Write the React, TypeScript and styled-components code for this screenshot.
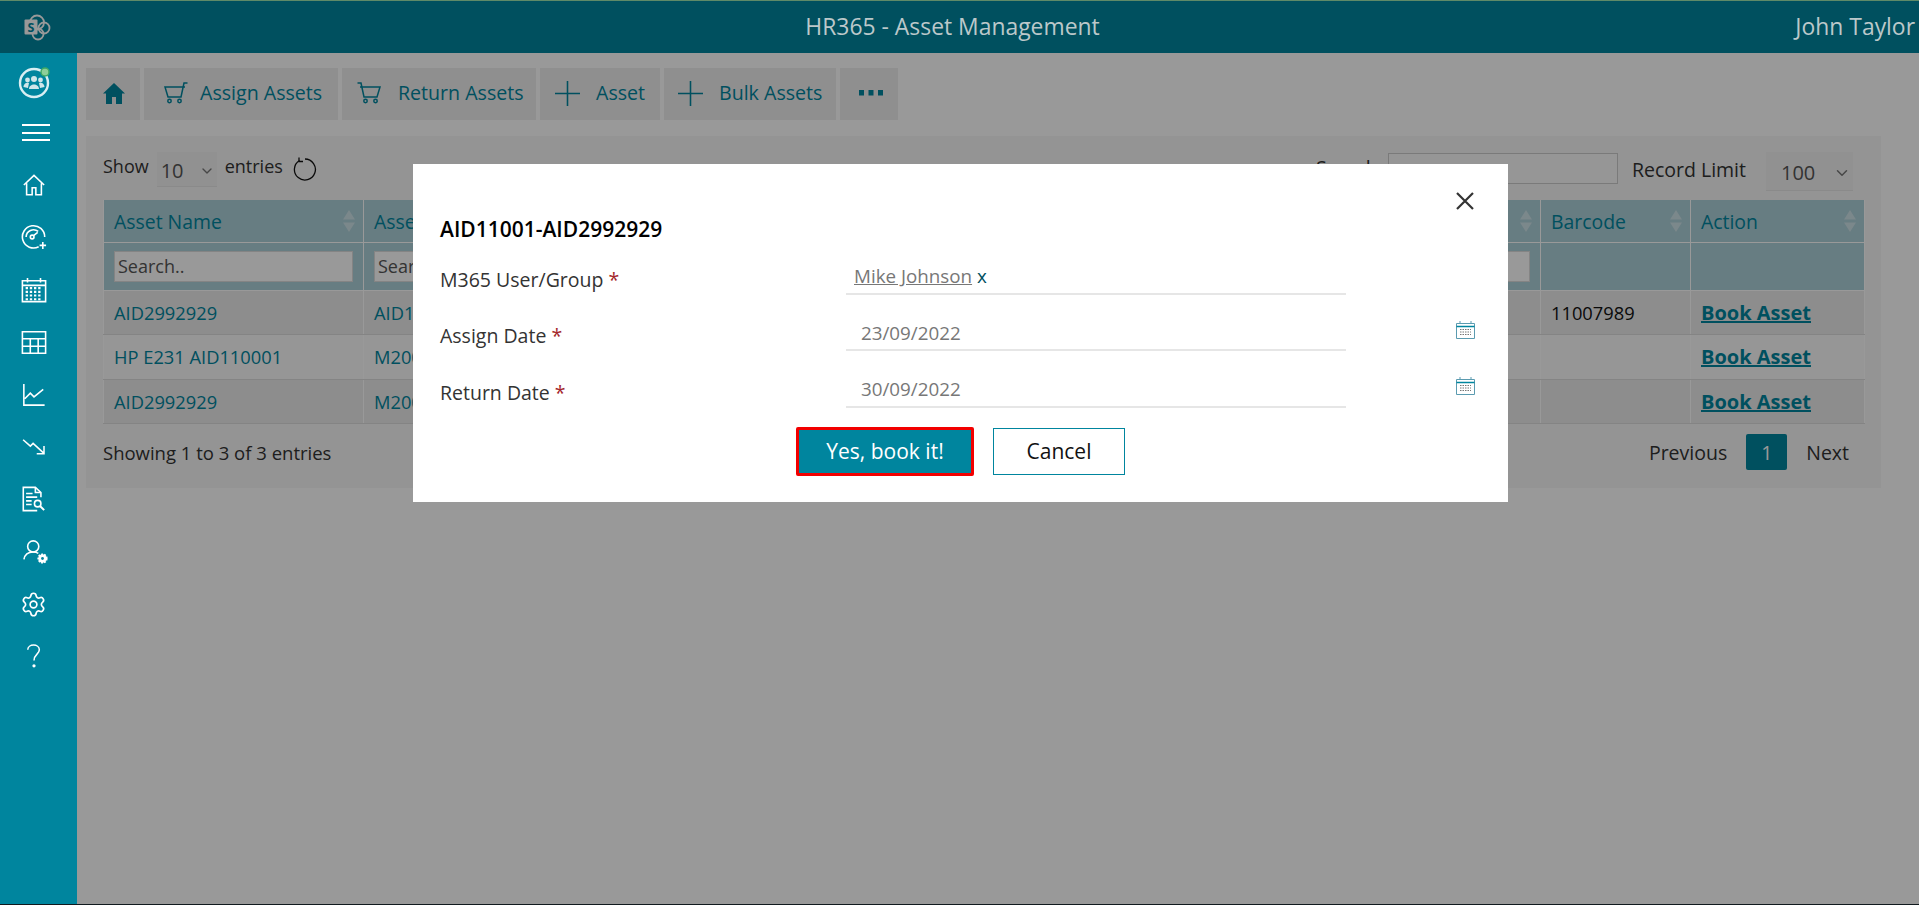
import * as React from "react";
import styled, { createGlobalStyle } from "styled-components";
import { ChevronDown } from "lucide-react";

const GlobalStyle = createGlobalStyle`
  html, body {
    margin: 0;
    padding: 0;
    height: 100%;
    overflow: hidden;
    background: #fff;
    font-family: "Open Sans", "Noto Sans", "Liberation Sans", sans-serif;
  }
  * { box-sizing: border-box; }
`;

const SPage = styled.div`
  height: 905px;
  display: flex;
  flex-direction: column;
  border-bottom: 1px solid #1d2a33;
`;
const SHeader = styled.header`
  position: relative;
  z-index: 3;
  height: 53px;
  flex: none;
  display: grid;
  grid-template-columns: 1fr auto 1fr;
  align-items: center;
  padding-bottom: 2px;
  background: #00505f;
  border-top: 1px solid #5f8a68;
  color: #bcc8ca;
  font-size: 22.9px;
`;
const SLogoSlot = styled.div`
  padding: 2px 0 0 24px;
  display: flex;
`;
const SAppTitle = styled.div`
  margin-right: 14px;
`;
const SUser = styled.div`
  justify-self: end;
  margin-right: 4px;
  font-size: 22.9px;
`;
const SBody = styled.div`
  flex: 1;
  display: flex;
  min-height: 0;
`;
const SSidebar = styled.nav`
  position: relative;
  z-index: 3;
  width: 77px;
  flex: none;
  background: #00859e;
  display: flex;
  flex-direction: column;
  padding-top: 1px;
`;
const SNavItem = styled.div`
  width: 67px;
  height: 52.4px;
  display: flex;
  align-items: center;
  justify-content: center;
`;
const SMain = styled.main`
  flex: 1;
  padding: 15px 38px 0 9px;
  min-width: 0;
`;
const SToolbar = styled.div`
  display: flex;
  gap: 4px;
`;
const SToolButton = styled.div<{ $w: number; $pad: number; $gap?: number }>`
  width: ${(p) => p.$w}px;
  height: 52px;
  padding-left: ${(p) => p.$pad}px;
  background: #eeeeee;
  color: #00859e;
  display: flex;
  align-items: center;
  gap: ${(p) => p.$gap ?? 0}px;
  font-size: 19.6px;
  line-height: 26px;
  padding-bottom: 2px;
  white-space: nowrap;
`;
const SCard = styled.section`
  margin-top: 16px;
  height: 352px;
  background: #f7f7f7;
  padding: 16px 17px 0;
`;
const SControls = styled.div`
  height: 48px;
  display: flex;
  align-items: flex-start;
  font-size: 18px;
  color: #333;
`;
const SShowLabel = styled.span`
  line-height: 28px;
`;
const SSelect = styled.div<{ $w: number; $h: number; $ml?: number; $mr?: number; $pad: number }>`
  width: ${(p) => p.$w}px;
  height: ${(p) => p.$h}px;
  margin: 0 ${(p) => p.$mr ?? 0}px 0 ${(p) => p.$ml ?? 0}px;
  background: #f2f2f2;
  border-bottom: 1px solid #e6e6e6;
  color: #555;
  font-size: 20px;
  display: flex;
  align-items: center;
  justify-content: space-between;
  padding: 3px 2px 0 ${(p) => p.$pad}px;
  flex: none;
`;
const SEntries = styled.span`
  line-height: 28px;
  margin: 0 10px 0 8px;
`;
const SRefresh = styled.svg`
  margin-top: 5px;
`;
const SSpacer = styled.div`
  flex: 1;
`;
const SSearchLabel = styled.span`
  font-size: 19.5px;
  line-height: 31px;
`;
const SSearchInput = styled.div`
  width: 230px;
  height: 31px;
  margin: 1px 14px 0 5px;
  border: 1px solid #ccc;
  background: #fafafa;
`;
const SLimitLabel = styled.span`
  font-size: 19.5px;
  line-height: 36px;
  margin-right: 20px;
`;
const STable = styled.table`
  width: 100%;
  border-collapse: collapse;
  table-layout: fixed;
  font-size: 18.3px;
`;
const SHeadCell = styled.th`
  position: relative;
  height: 42px;
  padding: 1px 0 0 10px;
  text-align: left;
  font-weight: 400;
  font-size: 19.4px;
  color: #00859e;
  background: #acd0d9;
  border: 1px solid #fff;
  border-top: 0;
`;
const SSort = styled.svg`
  position: absolute;
  right: 8px;
  top: 10px;
`;
const SFilterCell = styled.td`
  height: 48px;
  padding: 0 10px;
  background: #acd0d9;
  border: 1px solid #fff;
`;
const SFilterInput = styled.input`
  display: block;
  width: 100%;
  height: 31px;
  border: 1px solid #ddd;
  background: #fff;
  padding: 0 3px;
  font-family: inherit;
  font-size: 18px;
  &::placeholder { color: #555; opacity: 1; }
`;
const SRow = styled.tr<{ $odd: boolean }>`
  background: ${(p) => (p.$odd ? "#ebebeb" : "#fafafa")};
`;
const SCell = styled.td<{ $plain?: boolean }>`
  height: 44.6px;
  padding: 0 10px;
  color: ${(p) => (p.$plain ? "#111" : "#00859e")};
  border: 1px solid #dcdcdc;
  border-left-color: #fff;
  border-right-color: #fff;
  white-space: nowrap;
  overflow: hidden;
`;
const SBookLink = styled.a`
  font-weight: 700;
  color: #00859e;
  text-decoration: underline;
  font-size: 20px;
`;
const SFooter = styled.div`
  margin-top: 10px;
  display: flex;
  align-items: center;
  justify-content: space-between;
  font-size: 18.5px;
  color: #333;
  padding-right: 15px;
`;
const SPager = styled.div`
  display: flex;
  align-items: center;
  gap: 19px;
  font-size: 19.5px;
`;
const SPageNum = styled.span`
  width: 41px;
  height: 36px;
  border-radius: 2px;
  background: #00859e;
  color: #fff;
  display: flex;
  align-items: center;
  justify-content: center;
`;
const SOverlay = styled.div`
  position: fixed;
  inset: 0;
  z-index: 2;
  background: rgba(0, 0, 0, 0.4);
  display: flex;
  justify-content: center;
  padding: 164px 0 0 2px;
`;
const SModal = styled.div`
  position: relative;
  width: 1095px;
  height: 338px;
  background: #fff;
  padding: 50px 26px 0 27px;
`;
const SClose = styled.svg`
  position: absolute;
  top: 27px;
  right: 33px;
`;
const SModalTitle = styled.h2`
  margin: 0;
  font-size: 21px;
  line-height: 30px;
  font-weight: 600;
  color: #000;
`;
const SFormRow = styled.div`
  height: 56.5px;
  display: grid;
  grid-template-columns: 406px 500px 1fr;
  align-items: center;
`;
const SLabel = styled.label`
  padding-top: 14px;
  font-size: 19.5px;
  color: #333;
`;
const SStar = styled.span`
  color: #a4262c;
`;
const SField = styled.div<{ $inset: number }>`
  align-self: end;
  height: 33px;
  margin-bottom: 6px;
  padding: 0 0 2px ${(p) => p.$inset}px;
  border-bottom: 2px solid #e6e6e6;
  font-size: 18.8px;
  color: #777;
  display: flex;
  align-items: center;
`;
const SPerson = styled.a`
  color: #777;
  text-decoration: underline;
`;
const SRemove = styled.span`
  color: #00505f;
  margin-left: 5px;
`;
const SCalSlot = styled.div`
  justify-self: end;
  margin: 2px 7px 0 0;
  display: flex;
`;
const SButtons = styled.div`
  margin-top: 13px;
  padding-left: 356px;
  display: flex;
  align-items: center;
  gap: 19px;
`;
const SYes = styled.button`
  width: 178px;
  height: 49px;
  border: 3px solid #f20000;
  border-radius: 2px;
  background: #00859e;
  color: #fff;
  font-family: inherit;
  font-size: 21px;
`;
const SCancel = styled.button`
  width: 132px;
  height: 47px;
  border: 1px solid #00859e;
  background: #fff;
  color: #111;
  font-family: inherit;
  font-size: 21px;
`;
const SMenuBars = styled.div`
  width: 28px;
  height: 17px;
  border-top: 2px solid #fff;
  border-bottom: 2px solid #fff;
  position: relative;
  margin-left: 5px;
  &::after {
    content: "";
    position: absolute;
    left: 0;
    right: 0;
    top: 5.5px;
    height: 2px;
    background: #fff;
  }
`;
const SBadge = styled.svg`
  margin: 4px 0 0 3px;
`;
const SCart = styled.svg<{ $flip?: boolean }>`
  flex: none;
  transform: ${(p) => (p.$flip ? "scaleX(-1)" : "none")};
`;
const SUserGlyph = styled.svg`
  margin-left: 5px;
`;

const W = { fill: "none", stroke: "#fff", strokeWidth: 1.7 };

const SharePointLogo = () => (
  <svg width="27" height="27" viewBox="0 0 27 27">
    <circle cx="13" cy="8.5" r="7" fill="none" stroke="#999" strokeWidth="1.800" />
    <circle cx="20" cy="14" r="5.500" fill="none" stroke="#999" strokeWidth="1.800" />
    <circle cx="14" cy="20" r="5.500" fill="none" stroke="#999" strokeWidth="1.800" />
    <rect x="0.500" y="5.500" width="13" height="15" rx="1" fill="#999" />
    <text x="7" y="17.500" textAnchor="middle" fontSize="12.500" fontWeight="700" fontFamily="Open Sans" fill="#00505f">S</text>
  </svg>
);

const AppBadge = () => (
  <SBadge width="34" height="34" viewBox="0 0 34 34">
    <circle cx="16" cy="18" r="14" fill="none" stroke="#d9eef2" strokeWidth="2.400" />
    <circle cx="16" cy="14" r="3" fill="#cfe6ea" />
    <circle cx="9.500" cy="15" r="2.400" fill="#cfe6ea" />
    <circle cx="22.500" cy="15" r="2.400" fill="#cfe6ea" />
    <path d="M11 24c0-6 10-6 10 0zM5.500 22c0-4 4-5 5.500-4l-1 5zM26.500 22c0-4-4-5-5.500-4l1 5z" fill="#cfe6ea" />
    <circle cx="27" cy="7" r="4" fill="#8ecf9a" stroke="#3fa864" strokeWidth="1.500" />
  </SBadge>
);

const navIcons: React.ReactNode[] = [
  <svg key="home" width="24" height="24" viewBox="0 0 26 26" {...W}>
    <path d="M2 13 13 2.500 24 13M5 11v12.500h6V16h4v7.500h6V11" />
  </svg>,
  <svg key="gauge" width="26" height="26" viewBox="0 0 28 28" {...W}>
    <path d="M19 24.500A12 12 0 1 1 25.500 14M5.500 14a8 8 0 0 1 13-6" />
    <circle cx="12" cy="14" r="2" />
    <path d="M13.500 12.500 18 9M20 23h7M23.500 19.500v7.500" />
  </svg>,
  <svg key="cal" width="26" height="26" viewBox="0 0 28 28" {...W}>
    <path d="M1.500 4h25v22.500h-25zM1.500 9h25M7 1v5M21 1v5" />
    <path d="M5 12h18M5 16h18M5 20h18M5 24h18" strokeDasharray="2.500 2" strokeWidth="2.200" />
  </svg>,
  <svg key="table" width="26" height="25" viewBox="0 0 28 26" {...W}>
    <path d="M1.500 1.500h25v23h-25zM1.500 9h25M1.500 17h25M10 9v15.500M18.500 9v15.500" />
  </svg>,
  <svg key="up" width="24" height="24" viewBox="0 0 26 26" {...W}>
    <path d="M2 1v23h22.500M3 17l6-6 4 4 10-8" />
  </svg>,
  <svg key="down" width="26" height="20" viewBox="0 0 28 22" {...W}>
    <path d="M2 3l8 7 3-3 12 11M25 10v8.500h-8" />
  </svg>,
  <svg key="report" width="25" height="26" viewBox="0 0 26 28" {...W}>
    <path d="M21 12V7l-6-5.500H2v25h15" />
    <path d="M15 1.500V7h6M5 8h7M5 12h12M5 16h6M5 20h6" />
    <circle cx="17.500" cy="19" r="3.500" />
    <path d="M20 21.500 24.500 26" strokeWidth="2.200" />
  </svg>,
  <SUserGlyph key="user" width="26" height="26" viewBox="0 0 28 28" {...W}>
    <circle cx="11" cy="8" r="6" />
    <path d="M1 22c1-6 5-8 10-8 2 0 4 .4 5.500 1.500" />
    <circle cx="21" cy="21" r="4.500" fill="#fff" stroke="#fff" strokeDasharray="2 1.200" strokeWidth="2" />
    <circle cx="21" cy="21" r="1.500" fill="#00859e" stroke="none" />
  </SUserGlyph>,
  <svg key="gear" width="27" height="27" viewBox="0 0 24 24" fill="none" stroke="#fff" strokeWidth="1.500" strokeLinecap="round" strokeLinejoin="round">
    <path d="M9.671 4.136a2.340 2.340 0 0 1 4.659 0 2.340 2.340 0 0 0 3.319 1.915 2.340 2.340 0 0 1 2.330 4.033 2.340 2.340 0 0 0 0 3.831 2.340 2.340 0 0 1-2.330 4.033 2.340 2.340 0 0 0-3.319 1.915 2.340 2.340 0 0 1-4.659 0 2.340 2.340 0 0 0-3.320-1.915 2.340 2.340 0 0 1-2.330-4.033 2.340 2.340 0 0 0 0-3.831A2.340 2.340 0 0 1 6.350 6.051a2.340 2.340 0 0 0 3.320-1.915" />
    <circle cx="12" cy="12" r="3" />
  </svg>,
  <svg key="help" width="16" height="26" viewBox="0 0 18 28" {...W}>
    <path d="M2 7c0-7 13-7 13 0 0 5-6 5-6 12" />
    <circle cx="9" cy="25" r="1" fill="#fff" />
  </svg>,
];

const HomeGlyph = () => (
  <svg width="22" height="21" viewBox="0 0 22 21" fill="#00859e">
    <path d="M11 0 0 10.500h3V21h6v-7h4v7h6V10.500h3z" />
  </svg>
);
const CartGlyph = ({ flip }: { flip?: boolean }) => (
  <SCart $flip={flip} width="24" height="22" viewBox="0 0 24 22" fill="none" stroke="#00859e" strokeWidth="1.500">
    <path d="M23.500 1H20l-3 14H4L1 5h20" />
    <circle cx="5.500" cy="19" r="1.700" />
    <circle cx="15.500" cy="19" r="1.700" />
  </SCart>
);
const PlusGlyph = () => (
  <svg width="25" height="25" viewBox="0 0 24 24" stroke="#00859e" strokeWidth="1.500">
    <path d="M0 12h24M12 0v24" />
  </svg>
);
const DotsGlyph = () => (
  <svg width="24" height="6" viewBox="0 0 24 6" fill="#00859e">
    <rect x="0" width="5" height="5.500" />
    <rect x="9.500" width="5" height="5.500" />
    <rect x="19" width="5" height="5.500" />
  </svg>
);
const RefreshGlyph = () => (
  <SRefresh width="24" height="24" viewBox="0 0 24 24" fill="none" stroke="#111" strokeWidth="1.300">
    <path d="M6.500 3.500A10.500 10.500 0 1 0 12 2" />
    <path d="M6 .5v4h4" />
  </SRefresh>
);
const SortGlyph = () => (
  <SSort width="12" height="22" viewBox="0 0 12 22" fill="#fff" fillOpacity="0.4">
    <path d="M6 0 12 9.500H0zM6 22 0 12.500h12z" />
  </SSort>
);
const CalendarGlyph = () => (
  <svg width="19" height="18" viewBox="0 0 19 18" fill="none" stroke="#5b9bb0" strokeWidth="1">
    <path d="M.5 2.500h18v15H.5z" />
    <path d="M.5 5.500h18" stroke="#00859e" strokeWidth="1.500" />
    <path d="M4 0v3M15 0v3" />
    <path d="M4 8.500h11M4 11h11M4 13.500h11" strokeDasharray="1.500 1" stroke="#777" />
  </svg>
);

const columns = [
  { title: "Asset Name", width: 260 },
  { title: "Asset ID", width: 588 },
  { title: "Status", width: 589 },
  { title: "Barcode", width: 150 },
  { title: "Action", width: 174 },
];
const rows = [
  { name: "AID2992929", id: "AID11001", barcode: "11007989" },
  { name: "HP E231 AID110001", id: "M2001", barcode: "" },
  { name: "AID2992929", id: "M2002", barcode: "" },
];
const formRows = [
  { label: "Assign Date", value: "23/09/2022" },
  { label: "Return Date", value: "30/09/2022" },
];

export default function App() {
  return (
    <SPage>
      <GlobalStyle />
      <SHeader>
        <SLogoSlot><SharePointLogo /></SLogoSlot>
        <SAppTitle>HR365 - Asset Management</SAppTitle>
        <SUser>John Taylor</SUser>
      </SHeader>
      <SBody>
        <SSidebar>
          <SNavItem><AppBadge /></SNavItem>
          <SNavItem><SMenuBars /></SNavItem>
          {navIcons.map((icon, i) => (
            <SNavItem key={i}>{icon}</SNavItem>
          ))}
        </SSidebar>
        <SMain>
          <SToolbar>
            <SToolButton $w={54} $pad={17}><HomeGlyph /></SToolButton>
            <SToolButton $w={194} $pad={20} $gap={12}><CartGlyph />Assign Assets</SToolButton>
            <SToolButton $w={194} $pad={15} $gap={17}><CartGlyph flip />Return Assets</SToolButton>
            <SToolButton $w={120} $pad={15} $gap={16}><PlusGlyph />Asset</SToolButton>
            <SToolButton $w={172} $pad={14} $gap={16}><PlusGlyph />Bulk Assets</SToolButton>
            <SToolButton $w={58} $pad={19}><DotsGlyph /></SToolButton>
          </SToolbar>
          <SCard>
            <SControls>
              <SShowLabel>Show</SShowLabel>
              <SSelect $w={60} $h={35} $ml={8} $pad={4}>10<ChevronDown size={16} color="#777" /></SSelect>
              <SEntries>entries</SEntries>
              <RefreshGlyph />
              <SSpacer />
              <SSearchLabel>Search:</SSearchLabel>
              <SSearchInput />
              <SLimitLabel>Record Limit</SLimitLabel>
              <SSelect $w={87} $h={39} $mr={11} $pad={15}>100<ChevronDown size={18} color="#777" /></SSelect>
            </SControls>
            <STable>
              <colgroup>
                {columns.map((c) => <col key={c.title} width={c.width} />)}
              </colgroup>
              <thead>
                <tr>
                  {columns.map((c) => (
                    <SHeadCell key={c.title}>{c.title}<SortGlyph /></SHeadCell>
                  ))}
                </tr>
                <tr>
                  <SFilterCell><SFilterInput placeholder="Search.." /></SFilterCell>
                  <SFilterCell><SFilterInput placeholder="Search.." /></SFilterCell>
                  <SFilterCell><SFilterInput placeholder="Search.." /></SFilterCell>
                  <SFilterCell />
                  <SFilterCell />
                </tr>
              </thead>
              <tbody>
                {rows.map((r, i) => (
                  <SRow key={i} $odd={i % 2 === 0}>
                    <SCell>{r.name}</SCell>
                    <SCell>{r.id}</SCell>
                    <SCell />
                    <SCell $plain>{r.barcode}</SCell>
                    <SCell><SBookLink>Book Asset</SBookLink></SCell>
                  </SRow>
                ))}
              </tbody>
            </STable>
            <SFooter>
              <span>Showing 1 to 3 of 3 entries</span>
              <SPager>
                <span>Previous</span>
                <SPageNum>1</SPageNum>
                <span>Next</span>
              </SPager>
            </SFooter>
          </SCard>
        </SMain>
      </SBody>
      <SOverlay>
        <SModal>
          <SClose width="20" height="20" viewBox="0 0 20 20" stroke="#333" strokeWidth="2.200">
            <path d="M2 2l16 16M18 2 2 18" />
          </SClose>
          <SModalTitle>AID11001-AID2992929</SModalTitle>
          <SFormRow>
            <SLabel>M365 User/Group <SStar>*</SStar></SLabel>
            <SField $inset={8}>
              <SPerson>Mike Johnson</SPerson>
              <SRemove>x</SRemove>
            </SField>
          </SFormRow>
          {formRows.map((f) => (
            <SFormRow key={f.label}>
              <SLabel>{f.label} <SStar>*</SStar></SLabel>
              <SField $inset={15}>{f.value}</SField>
              <SCalSlot><CalendarGlyph /></SCalSlot>
            </SFormRow>
          ))}
          <SButtons>
            <SYes>Yes, book it!</SYes>
            <SCancel>Cancel</SCancel>
          </SButtons>
        </SModal>
      </SOverlay>
    </SPage>
  );
}
